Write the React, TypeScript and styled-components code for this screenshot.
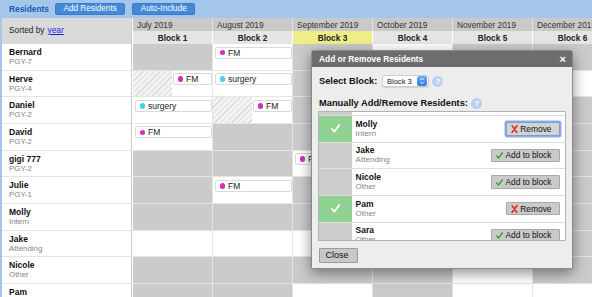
import React, { useLayoutEffect, useRef } from "react";
import styled, { createGlobalStyle, css } from "styled-components";

const GlobalStyle = createGlobalStyle`
  html, body {
    margin: 0;
    padding: 0;
  }
  body {
    width: 592px;
    height: 297px;
    overflow: hidden;
    background: #fff;
    color: #222;
    font-family: "Liberation Sans", Arial, sans-serif;
    font-size: 8.3px;
  }
`;

const ROW = 26.67;
const MAGENTA = "#d22cc1";
const CYAN = "#3fd2ea";

type Chip = { label: string; color: string; half?: boolean };
type Slot = "off" | "open" | Chip;

const fm = (half = false): Chip => ({ label: "FM", color: MAGENTA, half });
const surgery: Chip = { label: "surgery", color: CYAN };

const months = [
  "July 2019",
  "August 2019",
  "September 2019",
  "October 2019",
  "November 2019",
  "December 2019",
];

const residents: { name: string; level: string; slots: Slot[] }[] = [
  { name: "Bernard", level: "PGY-7", slots: ["off", fm(), "off", "open", "off", "off"] },
  { name: "Herve", level: "PGY-4", slots: [fm(true), surgery, "off", "off", "off", "open"] },
  { name: "Daniel", level: "PGY-2", slots: [surgery, fm(true), "off", "off", "off", "off"] },
  { name: "David", level: "PGY-2", slots: [fm(), "off", "off", "off", "off", "off"] },
  { name: "gigi 777", level: "PGY-2", slots: ["off", "off", fm(), "off", "off", "off"] },
  { name: "Julie", level: "PGY-1", slots: ["off", fm(), "off", "off", "off", "off"] },
  { name: "Molly", level: "Intern", slots: ["off", "off", "off", "off", "off", "off"] },
  { name: "Jake", level: "Attending", slots: ["open", "open", "open", "off", "off", "off"] },
  { name: "Nicole", level: "Other", slots: ["off", "off", "off", "off", "open", "off"] },
  { name: "Pam", level: "Other", slots: ["off", "off", "open", "off", "open", "open"] },
];

const blockMembers = [
  { name: "Bernard", level: "PGY-7", inBlock: false },
  { name: "Herve", level: "PGY-4", inBlock: false },
  { name: "Daniel", level: "PGY-2", inBlock: false },
  { name: "David", level: "PGY-2", inBlock: false },
  { name: "gigi 777", level: "PGY-2", inBlock: true },
  { name: "Julie", level: "PGY-1", inBlock: false },
  { name: "Molly", level: "Intern", inBlock: true, focused: true },
  { name: "Jake", level: "Attending", inBlock: false },
  { name: "Nicole", level: "Other", inBlock: false },
  { name: "Pam", level: "Other", inBlock: true },
  { name: "Sara", level: "Other", inBlock: false },
];

const Page = styled.div`
  position: relative;
  width: 592px;
  height: 297px;
  overflow: hidden;
  background: #fff;
`;

const TopBar = styled.div`
  height: 18px;
  display: flex;
  align-items: center;
  gap: 6px;
  padding-left: 9px;
  background: #a3c6ea;
`;

const BarTitle = styled.span`
  font-weight: bold;
  font-size: 8.4px;
  color: #1b59b2;
`;

const BarButton = styled.button`
  height: 12px;
  padding: 0 7.5px;
  border: 1px solid #3a7ccc;
  border-radius: 2px;
  background: #4489d8;
  color: #fff;
  font: inherit;
  font-size: 8.2px;
  line-height: 10px;

  & + & {
    margin-left: 1px;
  }
`;

const Board = styled.div`
  display: flex;
  align-items: flex-start;
`;

const NameColumn = styled.div`
  flex: none;
  width: 129px;
  border-left: 2px solid #a3c6ea;
  border-right: 1px solid #cbcbcb;
  margin-right: 1px;
`;

const SortCell = styled.div`
  height: 26px;
  box-sizing: border-box;
  display: flex;
  align-items: center;
  gap: 3px;
  padding: 0 0 2px 7px;
  background: #d9d9d9;
  color: #222;

  a {
    color: #1a1ae6;
    text-decoration: underline;
  }
`;

const NameCell = styled.div`
  height: ${ROW}px;
  box-sizing: border-box;
  padding: 3px 0 0 7px;
  border-bottom: 1px solid #e4e4e4;
  line-height: 10px;
`;

const PersonName = styled.div`
  font-weight: bold;
  font-size: 8.5px;
  color: #111;
  white-space: nowrap;
`;

const PersonLevel = styled.div`
  font-size: 7.9px;
  color: #858585;
  white-space: nowrap;
`;

const Schedule = styled.div`
  flex: none;
  width: 480px;
`;

const Track = styled.div`
  display: grid;
  grid-template-columns: repeat(6, 79px);
  column-gap: 1px;
`;

const MonthRow = styled(Track)`
  height: 13px;
  background: #e3e3e3;
`;

const MonthCell = styled.div`
  display: flex;
  align-items: center;
  padding-left: 4px;
  background: #c9c9c9;
  color: #333;
  white-space: nowrap;
  overflow: hidden;
`;

const BlockRow = styled(Track)`
  height: 13px;
  background: #fff;
`;

const BlockCell = styled.div<{ $current?: boolean }>`
  display: flex;
  align-items: center;
  justify-content: center;
  background: ${(p) => (p.$current ? "#eeed87" : "#e5e5e5")};
  font-weight: bold;
  color: #222;
`;

const SlotGrid = styled(Track)`
  grid-auto-rows: ${ROW - 1}px;
  row-gap: 1px;
  background: #e5e5e5;
`;

const SlotCell = styled.div<{ $open: boolean }>`
  display: flex;
  min-width: 0;
  background: ${(p) => (p.$open ? "#fff" : "#cbcbcb")};
`;

const Hatch = styled.div`
  flex: 1;
  background: repeating-linear-gradient(
    135deg,
    #f3f3f3 0px,
    #f3f3f3 3px,
    #d9d9d9 3px,
    #d9d9d9 4px
  );
`;

const ChipArea = styled.div<{ $half?: boolean }>`
  flex: 1;
  min-width: 0;
  padding: 2.5px 0 0 ${(p) => (p.$half ? 1 : 2)}px;
`;

const ChipBox = styled.div`
  height: 12px;
  box-sizing: border-box;
  display: flex;
  align-items: center;
  gap: 3px;
  padding-left: 3.5px;
  border: 1px solid #d9d9d9;
  border-radius: 2px;
  background: #fff;
  color: #222;
  font-size: 8.5px;
  white-space: nowrap;
  overflow: hidden;
`;

const Dot = styled.span<{ $color: string }>`
  flex: none;
  width: 5.5px;
  height: 5.5px;
  border-radius: 50%;
  background: ${(p) => p.$color};
`;

const Dialog = styled.div`
  position: absolute;
  left: 311px;
  top: 50px;
  width: 262px;
  height: 219px;
  box-sizing: border-box;
  display: flex;
  flex-direction: column;
  border: 1px solid #8a8a8a;
  border-radius: 3px 3px 0 0;
  background: #ededed;
  box-shadow: 0 4px 14px rgba(0, 0, 0, 0.45);
`;

const DialogTitle = styled.div`
  flex: none;
  height: 16px;
  display: flex;
  align-items: center;
  justify-content: space-between;
  padding: 0 6px 0 7px;
  background: #6d6d6d;
  color: #fff;
  font-weight: bold;
  font-size: 8.4px;
`;

const CloseX = styled.span`
  font-size: 11px;
  line-height: 10px;
`;

const DialogBody = styled.div`
  flex: 1;
  display: flex;
  flex-direction: column;
  padding: 0 6px;
`;

const FieldRow = styled.div<{ $gap: number }>`
  height: 12px;
  margin-top: ${(p) => p.$gap}px;
  display: flex;
  align-items: center;
  padding-left: 1px;
`;

const FieldLabel = styled.span`
  font-weight: bold;
  font-size: 9.3px;
  color: #111;
`;

const SelectBox = styled.div`
  width: 47px;
  height: 12px;
  box-sizing: border-box;
  margin-left: 4.5px;
  display: flex;
  align-items: center;
  justify-content: space-between;
  padding: 0 0.5px 0 4px;
  border: 1px solid #cdcdcd;
  border-radius: 3px;
  background: #fff;
  box-shadow: 0 1px 1px rgba(0, 0, 0, 0.12);
  font-size: 7.6px;
  color: #222;
`;

const Stepper = styled.span`
  width: 10px;
  height: 10px;
  display: flex;
  align-items: center;
  justify-content: center;
  border-radius: 2.5px;
  background: linear-gradient(#6eaaf7, #2d7ae5);
`;

const HelpIcon = styled.span`
  width: 11px;
  height: 11px;
  margin-left: 3.5px;
  display: inline-flex;
  align-items: center;
  justify-content: center;
  border-radius: 50%;
  background: #b9d2f0;
  color: #fff;
  font-weight: bold;
  font-size: 8px;
`;

const MemberList = styled.div`
  height: 130px;
  margin-top: 2px;
  box-sizing: border-box;
  border: 1px solid #b3b3b3;
  background: #fff;
  overflow: hidden;
`;

const MemberRow = styled.div`
  height: ${ROW}px;
  box-sizing: border-box;
  display: flex;
  border-bottom: 1px solid #dedede;
`;

const Status = styled.div<{ $on: boolean }>`
  flex: none;
  width: 33px;
  display: flex;
  align-items: center;
  justify-content: center;
  background: ${(p) => (p.$on ? "#8fd190" : "#cccccc")};
`;

const MemberInfo = styled.div`
  flex: 1;
  display: flex;
  flex-direction: column;
  justify-content: center;
  padding-left: 3.5px;
  line-height: 10px;
`;

const MemberLevel = styled(PersonLevel)`
  font-size: 8.1px;
`;

const ActionButton = styled.button<{ $focused?: boolean }>`
  align-self: center;
  height: 13.5px;
  margin-right: 5.5px;
  display: flex;
  align-items: center;
  gap: 2.5px;
  padding: 0 7px 0 4px;
  border: 1px solid #a8a8a8;
  border-radius: 1px;
  background: #cacaca;
  color: #111;
  font: inherit;
  font-size: 8.4px;
  white-space: nowrap;

  ${(p) =>
    p.$focused &&
    css`
      border-color: #7b9dd4;
      background: #d3d3d3;
      box-shadow: 0 0 0 1.5px #86adec;
    `}
`;

const CloseButton = styled.button`
  align-self: flex-start;
  height: 14.5px;
  margin: 7px 0 0 1px;
  padding: 0 8px 0 5.5px;
  border: 1px solid #9c9c9c;
  border-radius: 1px;
  background: #c8c8c8;
  color: #111;
  font: inherit;
  font-size: 9px;
`;

const CheckIcon = ({ color, size = 7 }: { color: string; size?: number }) => (
  <svg width={size} height={size} viewBox="0 0 8 8">
    <path
      d="M0.8 4.4 L3 6.8 L7.4 0.8"
      fill="none"
      stroke={color}
      strokeWidth={1.5}
      strokeLinecap="round"
      strokeLinejoin="round"
    />
  </svg>
);

const CrossIcon = () => (
  <svg width={7} height={8} viewBox="0 0 7 8">
    <path
      d="M1.2 0.9 L5.8 7.3 M6 0.7 L1 7.4"
      fill="none"
      stroke="#e2271f"
      strokeWidth={1.6}
      strokeLinecap="round"
    />
  </svg>
);

const StepperArrows = () => (
  <svg width={6} height={8} viewBox="0 0 6 8">
    <path
      d="M1.2 3 L3 1.2 L4.8 3 M1.2 5 L3 6.8 L4.8 5"
      fill="none"
      stroke="#fff"
      strokeWidth={0.9}
    />
  </svg>
);

const SlotView = ({ slot }: { slot: Slot }) => {
  if (slot === "off") return <SlotCell $open={false} />;
  if (slot === "open") return <SlotCell $open />;
  return (
    <SlotCell $open>
      {slot.half && <Hatch />}
      <ChipArea $half={slot.half}>
        <ChipBox>
          <Dot $color={slot.color} />
          {slot.label}
        </ChipBox>
      </ChipArea>
    </SlotCell>
  );
};

const BlockDialog = () => {
  const listRef = useRef<HTMLDivElement>(null);

  useLayoutEffect(() => {
    // scrolled so that Molly sits near the top, like the screenshot
    if (listRef.current) listRef.current.scrollTop = ROW * 6 - 4.3;
  }, []);

  return (
    <Dialog>
      <DialogTitle>
        <span>Add or Remove Residents</span>
        <CloseX>×</CloseX>
      </DialogTitle>
      <DialogBody>
        <FieldRow $gap={8}>
          <FieldLabel>Select Block:</FieldLabel>
          <SelectBox>
            Block 3
            <Stepper>
              <StepperArrows />
            </Stepper>
          </SelectBox>
          <HelpIcon>?</HelpIcon>
        </FieldRow>
        <FieldRow $gap={10}>
          <FieldLabel>Manually Add/Remove Residents:</FieldLabel>
          <HelpIcon>?</HelpIcon>
        </FieldRow>
        <MemberList ref={listRef}>
          {blockMembers.map((m) => (
            <MemberRow key={m.name}>
              <Status $on={m.inBlock}>
                {m.inBlock && <CheckIcon color="#fff" size={9} />}
              </Status>
              <MemberInfo>
                <PersonName>{m.name}</PersonName>
                <MemberLevel>{m.level}</MemberLevel>
              </MemberInfo>
              {m.inBlock ? (
                <ActionButton $focused={m.focused}>
                  <CrossIcon />
                  Remove
                </ActionButton>
              ) : (
                <ActionButton>
                  <CheckIcon color="#2a9b2a" />
                  Add to block
                </ActionButton>
              )}
            </MemberRow>
          ))}
        </MemberList>
        <CloseButton>Close</CloseButton>
      </DialogBody>
    </Dialog>
  );
};

const App = () => {
  return (
    <Page>
      <GlobalStyle />
      <TopBar>
        <BarTitle>Residents</BarTitle>
        <BarButton>Add Residents</BarButton>
        <BarButton>Auto-Include</BarButton>
      </TopBar>
      <Board>
        <NameColumn>
          <SortCell>
            Sorted by <a href="#year">year</a>
          </SortCell>
          {residents.map((r) => (
            <NameCell key={r.name}>
              <PersonName>{r.name}</PersonName>
              <PersonLevel>{r.level}</PersonLevel>
            </NameCell>
          ))}
        </NameColumn>
        <Schedule>
          <MonthRow>
            {months.map((m) => (
              <MonthCell key={m}>{m}</MonthCell>
            ))}
          </MonthRow>
          <BlockRow>
            {months.map((m, i) => (
              <BlockCell key={m} $current={i === 2}>
                Block {i + 1}
              </BlockCell>
            ))}
          </BlockRow>
          <SlotGrid>
            {residents.map((r) =>
              r.slots.map((s, i) => <SlotView key={`${r.name}-${i}`} slot={s} />)
            )}
          </SlotGrid>
        </Schedule>
      </Board>
      <BlockDialog />
    </Page>
  );
};

export default App;
